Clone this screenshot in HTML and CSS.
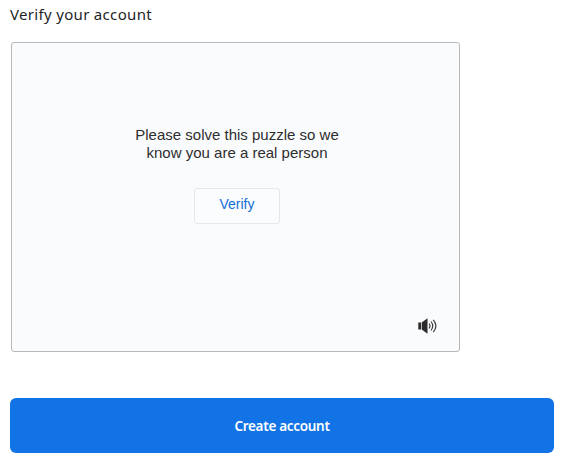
FILE: index.html
```html
<!DOCTYPE html>
<html lang="en">
<head>
<meta charset="utf-8">
<title>Verify your account</title>
<link rel="stylesheet" href="styles.css">
</head>
<body>
<main class="page">
  <h1 class="title">Verify your account</h1>
  <section class="puzzle">
    <p class="prompt">Please solve this puzzle so we<br>know you are a real person</p>
    <button class="verify">Verify</button>
    <button class="audio" aria-label="Audio">
      <svg width="20" height="16" viewBox="0 0 20 16" fill="none">
        <path d="M0.300 4.500H3V11.500H0.300ZM3.700 4.500L9.500 0.300V15.700L3.700 11.500Z" fill="#2b2b2b"/>
        <path d="M11 5.500Q13 8 11 10.500M13 3.500Q16.500 8 13 12.500M15.300 1.800Q20.500 8 15.300 14.200" stroke="#3a3a3a" stroke-width="1.200"/>
      </svg>
    </button>
  </section>
  <button class="create">Create account</button>
</main>
</body>
</html>
```
FILE: styles.css
```css
* { box-sizing: border-box; }
body { margin: 0; background: #fff; }
button { font: inherit; padding: 0; cursor: pointer; }
.page { padding: 3px 16px 0 10px; }
.title { margin: 0; font: 400 15px/22px "Noto Sans", sans-serif; letter-spacing: 0.32px; color: #1f1f1f; }
.puzzle {
  position: relative;
  display: flex;
  flex-direction: column;
  align-items: center;
  width: 449px;
  height: 310px;
  margin: 17px 0 0 1px;
  padding-top: 83px;
  border: 1px solid #b8b8b8;
  border-radius: 3px;
  background: #fafbfd;
  font-family: "Liberation Sans", Arial, sans-serif;
}
.prompt { margin: 0 0 26px; padding-left: 3px; font-size: 15px; line-height: 18px; text-align: center; color: #2e2e2e; }
.verify { width: 86px; height: 36px; margin-left: 3px; padding-bottom: 4px; border: 1px solid #e5e7ea; border-radius: 3px; background: #fafcfe; color: #146fd7; font-size: 14px; }
.audio { position: absolute; right: 21px; bottom: 17px; display: flex; border: 0; background: none; }
.create { display: block; width: 100%; height: 55px; margin-top: 46px; border: 0; border-radius: 6px; background: #1273e6; color: #fff; font: 600 13.5px/20px "Noto Sans", sans-serif; letter-spacing: -0.3px; }
```
